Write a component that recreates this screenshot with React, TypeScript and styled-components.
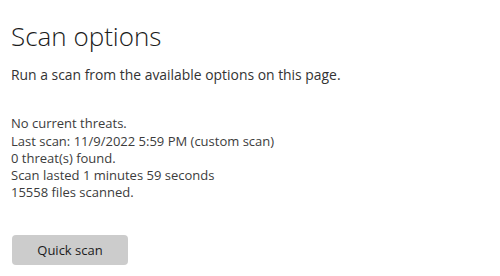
import React from "react";
import styled, { createGlobalStyle } from "styled-components";

const GlobalStyle = createGlobalStyle`
  html, body {
    margin: 0;
    padding: 0;
    background: #ffffff;
  }
  body {
    font-family: "Open Sans", "Noto Sans", sans-serif;
  }
`

const Page = styled.div`
  width: 500px;
  height: 276px;
  box-sizing: border-box;
  padding: 20px 12px 0 11px;
  background: #ffffff;
  display: flex;
  flex-direction: column;
  align-items: flex-start;
`

const Title = styled.h1`
  margin: 0;
  font-size: 26px;
  line-height: 32px;
  font-weight: 300;
  color: #1b1b1b;
`

const Subtitle = styled.p`
  margin: 14px 0 0 0;
  font-size: 13.9px;
  line-height: 17px;
  color: #333333;
`

const Status = styled.div`
  margin-top: 32px;
  display: flex;
  flex-direction: column;
`

const StatusLine = styled.div<{ $gap?: number }>`
  margin-top: ${(p) => p.$gap ?? 0}px;
  font-size: 13px;
  line-height: 17px;
  color: #3c3c3c;
`

const ScanButton = styled.button`
  margin-top: 34px;
  margin-left: 1px;
  width: 116px;
  height: 30px;
  border: none;
  border-radius: 4px;
  background: #cccccc;
  color: #1b1b1b;
  font-family: "Open Sans", "Noto Sans", sans-serif;
  font-size: 13px;
  padding: 0;
  cursor: pointer;
`

const lines = [
  "Last scan: 11/9/2022 5:59 PM (custom scan)",
  "0 threat(s) found.",
  "Scan lasted 1 minutes 59 seconds",
  "15558 files scanned.",
]

const App: React.FC = () => {
  return (
    <>
      <GlobalStyle />
      <Page>
        <Title>Scan options</Title>
        <Subtitle>Run a scan from the available options on this page.</Subtitle>
        <Status>
          <StatusLine>No current threats.</StatusLine>
          {lines.map((l, i) => (
            <StatusLine key={l} $gap={i === 0 ? 1 : 0}>{l}</StatusLine>
          ))}
        </Status>
        <ScanButton>Quick scan</ScanButton>
      </Page>
    </>
  )
};

export default App;
